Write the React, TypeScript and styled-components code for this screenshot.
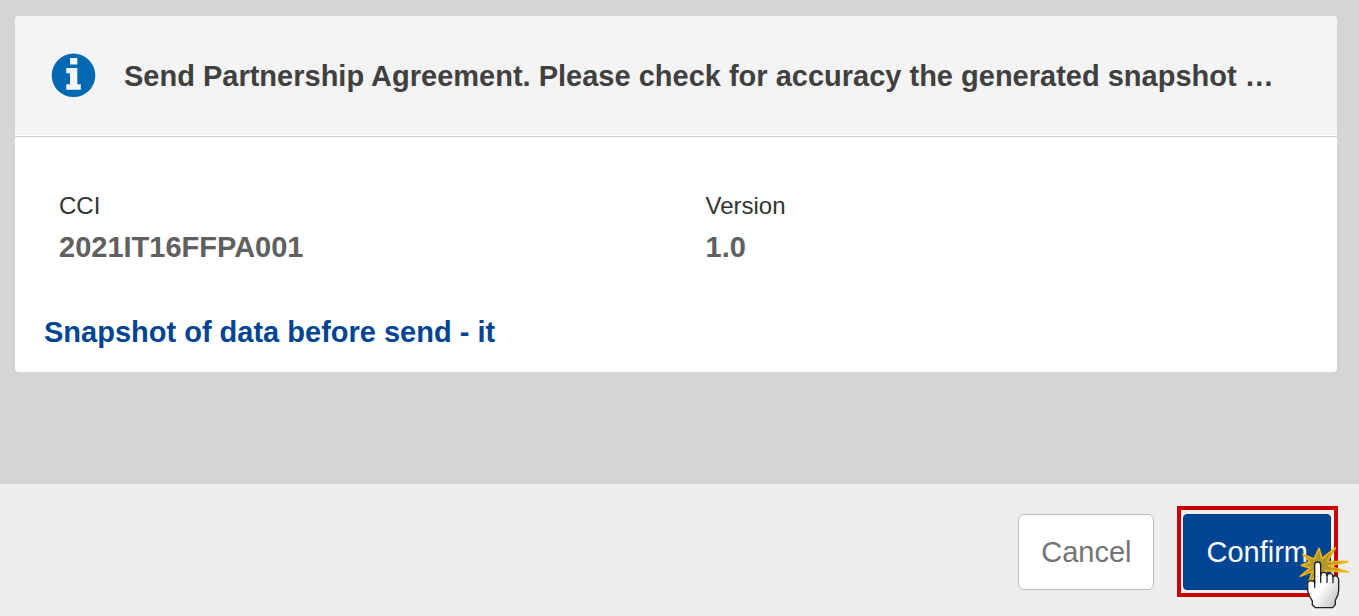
import React from "react";
import styled, { createGlobalStyle } from "styled-components";

const GlobalStyle = createGlobalStyle`
  *, *::before, *::after { box-sizing: border-box; }
  body {
    margin: 0;
    background: #d5d5d5;
    font-family: "Liberation Sans", Arial, sans-serif;
    font-size: 29px;
    line-height: 36px;
  }
`;

const Dialog = styled.div`
  display: flex;
  flex-direction: column;
  min-height: 100vh;
`;

const Content = styled.main`
  flex: 1;
  padding: 16px 22px 16px 15px;
`;

const Card = styled.section`
  overflow: hidden;
  border-radius: 4px;
  background: #fff;
`;

const CardHeader = styled.header`
  display: flex;
  align-items: center;
  gap: 28px;
  padding: 37px 36px 38px;
  background: #f4f4f4;
  border-bottom: 1px solid #cfcfcf;
  box-shadow: inset 0 -1px #fff;
`;

const InfoIcon = styled.svg`
  flex: none;
  width: 45px;
  height: 45px;
`;

const Title = styled.h1`
  margin: 0;
  font-size: 29px;
  line-height: 36px;
  color: #404040;
  white-space: nowrap;
`;

const CardBody = styled.div`
  padding: 51px 0 22px 29px;
`;

const Fields = styled.dl`
  display: grid;
  grid-template-columns: 1fr 1fr;
  margin: 0 0 49px;
`;

const Field = styled.div`
  padding: 0 15px;
`;

const Label = styled.dt`
  font-size: 24px;
  color: #333;
`;

const Value = styled.dd`
  margin: 5px 0 0;
  font-weight: 700;
  color: #606060;
`;

const SnapshotLink = styled.a`
  display: block;
  width: fit-content;
  font-weight: 700;
  color: #004494;
  text-decoration: none;
`;

const Footer = styled.footer`
  display: flex;
  justify-content: flex-end;
  gap: 29px;
  padding: 30px 28px 26px;
  background: #eee;
  box-shadow: 0 -1px #d0d0d0;
`;

const Button = styled.button<{ $primary?: boolean }>`
  padding: 19px 22px;
  border: 1px solid ${(p) => (p.$primary ? "#003c84" : "#bbb")};
  border-radius: ${(p) => (p.$primary ? 4 : 6)}px;
  background: ${(p) => (p.$primary ? "#004494" : "#fff")};
  color: ${(p) => (p.$primary ? "#fff" : "#737373")};
  font: inherit;
  cursor: pointer;
`;

const Highlighted = styled.div`
  position: relative;

  &::after {
    content: "";
    position: absolute;
    inset: -8px -7px -7px -6px;
    border: 4px solid #c00;
    pointer-events: none;
  }
`;

const Pointer = styled.svg`
  position: absolute;
  z-index: 1;
  right: -20px;
  bottom: -20px;
  width: 54px;
  height: 65px;
  pointer-events: none;
`;

function ClickPointer() {
  return (
    <Pointer viewBox="891 207 162 195" aria-hidden="true">
      <defs>
        <linearGradient id="hand" x1="0" y1="0" x2="1" y2="1">
          <stop offset="0.5" stopColor="#fff" />
          <stop offset="1" stopColor="#b8b8b8" />
        </linearGradient>
      </defs>
      <path
        d="M930 257L908 235L942 249L957 217L966 247L1006 216L982 256L1044 257L986 270L1045 288L976 284L982 312L955 290L922 328L938 286L901 301L930 276L904 268Z"
        fill="#d3a91f"
        fillOpacity="0.85"
        stroke="#edb512"
        strokeWidth="5"
        strokeLinejoin="round"
      />
      <path
        d="M942 262L922 245M938 281L916 293M942 290L930 313M970 257L992 232M957 252V234M980 264L1016 260M982 275L1020 281"
        fill="none"
        stroke="#a48b28"
        strokeWidth="2"
        strokeLinecap="round"
      />
      <circle cx="955" cy="268" r="13" fill="#899238" />
      <path
        d="M944 319V267Q944 258 953 258Q962 258 962 267V297Q964 289 972 289Q980 289 981 298Q984 292 991 292Q999 293 999 302Q1003 298 1009 300Q1016 303 1016 311V343Q1016 357 1006 373V386L998 395H946L937 386V375Q927 361 923 344V323Q923 315 931 314Q939 314 944 319Z"
        fill="url(#hand)"
        stroke="#222"
        strokeWidth="4"
        strokeLinejoin="round"
      />
      <path
        d="M944 316V334M962 297V319M981 298V319M999 302V320"
        fill="none"
        stroke="#222"
        strokeWidth="4"
        strokeLinecap="round"
      />
    </Pointer>
  );
}

export default function App() {
  return (
    <>
      <GlobalStyle />
      <Dialog>
        <Content>
          <Card>
            <CardHeader>
              <InfoIcon viewBox="0 0 45 45" aria-hidden="true">
                <circle cx="22.5" cy="22.3" r="21.8" fill="#0069b1" />
                <path
                  d="M19 5h7.3v6.5H19zM15.3 15h11v16.3h3.5v5.5H15.3v-5.5H19V20.3h-3.7z"
                  fill="#f4f4f4"
                />
              </InfoIcon>
              <Title>
                Send Partnership Agreement. Please check for accuracy the generated snapshot …
              </Title>
            </CardHeader>
            <CardBody>
              <Fields>
                <Field>
                  <Label>CCI</Label>
                  <Value>2021IT16FFPA001</Value>
                </Field>
                <Field>
                  <Label>Version</Label>
                  <Value>1.0</Value>
                </Field>
              </Fields>
              <SnapshotLink href="#snapshot">Snapshot of data before send - it</SnapshotLink>
            </CardBody>
          </Card>
        </Content>
        <Footer>
          <Button type="button">Cancel</Button>
          <Highlighted>
            <Button type="button" $primary>
              Confirm
            </Button>
            <ClickPointer />
          </Highlighted>
        </Footer>
      </Dialog>
    </>
  );
}
